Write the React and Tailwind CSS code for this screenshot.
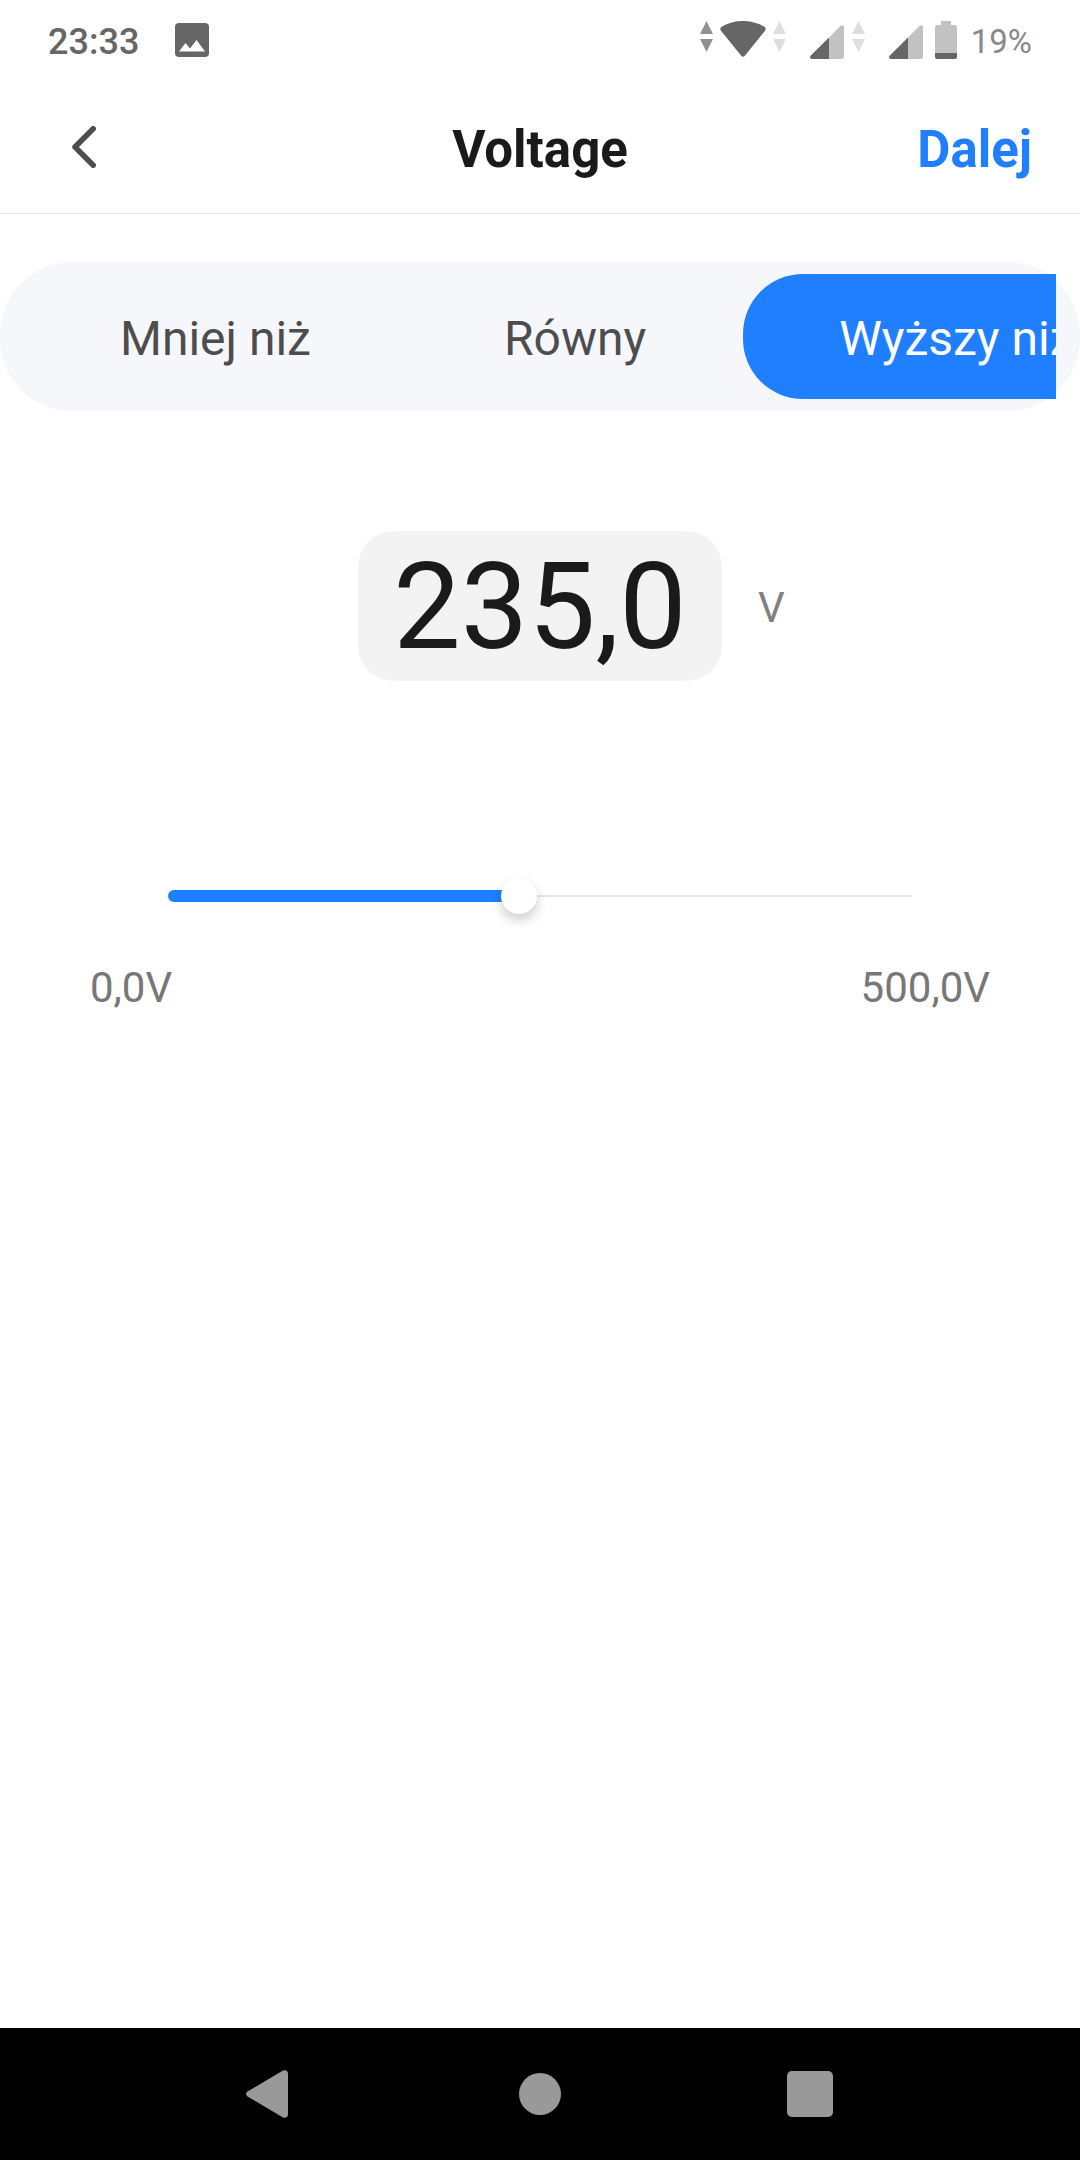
import React, { useState } from 'react';

const tabs = ["Mniej niż", "Równy", "Wyższy niż"];
const MAX = 500;
const THUMB = 36;

const formatVolt = (n) => n.toFixed(1).replace(".", ",");

function DataArrows({ className }) {
    return (
        <svg className={className} width="13" height="31" viewBox="0 0 13 31" fill="currentColor" aria-hidden="true">
            <path d="M6.5 0L13 13H0z" />
            <path d="M0 18H13L6.5 31z" />
        </svg>
    );
}

function Signal() {
    return (
        <svg width="34" height="34" viewBox="0 0 34 34" aria-hidden="true">
            <path d="M30.6.8Q34-.8 34 2.500V32Q34 34 32 34H19V12.400z" fill="#c2c2c2" />
            <path d="M19 12.400V34H2Q-1 33.500.6 30.800z" fill="#666666" />
        </svg>
    );
}

function StatusBar() {
    return (
        <div className="flex h-[84px] items-center justify-between px-12 pb-1 text-[#666666]">
            <div className="flex items-center gap-9">
                <span className="pt-1 text-4xl font-medium">23:33</span>
                <svg width="34" height="34" viewBox="0 0 34 34" aria-hidden="true">
                    <rect width="34" height="34" rx="4" fill="currentColor" />
                    <path d="M4 28.500L10.500 20L15 25.500L21.500 17L30 28.500z" fill="#ffffff" />
                </svg>
            </div>
            <div className="flex items-center">
                <div className="flex h-[38px] items-start gap-[6px]">
                    <DataArrows className="text-[#919191]" />
                    <svg width="48" height="36" viewBox="0 0 48 36" aria-hidden="true">
                        <path d="M2.600 5.800C15-2 33-2 45.400 5.800Q47.600 7.400 46 9.700L26 34.500Q24 37 22 34.500L2 9.700Q.4 7.400 2.600 5.800z" fill="currentColor" />
                    </svg>
                    <DataArrows className="text-[#dedede]" />
                </div>
                <div className="ml-6 flex h-[38px] items-end">
                    <Signal />
                </div>
                <div className="ml-2 flex h-[38px] items-start">
                    <DataArrows className="text-[#dedede]" />
                </div>
                <div className="ml-6 flex h-[38px] items-end gap-3">
                    <Signal />
                    <svg width="22" height="38" viewBox="0 0 22 38" aria-hidden="true">
                        <path d="M6 0H16V4H20Q22 4 22 6V32H0V6Q0 4 2 4H6z" fill="#c2c2c2" />
                        <path d="M0 32H22V36Q22 38 20 38H2Q0 38 0 36z" fill="currentColor" />
                    </svg>
                </div>
                <span className="ml-[14px] pt-1 text-[33px] leading-9 text-[#888888]">19%</span>
            </div>
        </div>
    );
}

function Header() {
    return (
        <header className="grid h-[130px] grid-cols-3 items-center border-b border-[#e5e5e5] px-12 text-[51px] leading-[60px] font-bold">
            <button type="button" aria-label="Wstecz" className="justify-self-start px-6 pb-1 text-[#4d4d4d]">
                <svg width="24" height="42" viewBox="0 0 24 42" fill="none" stroke="currentColor" strokeWidth="5.500" strokeLinecap="round" strokeLinejoin="round">
                    <path d="M21.200 2.800L3 21L21.200 39.200" />
                </svg>
            </button>
            <h1 className="pt-[2px] text-center text-[#1a1a1a]">Voltage</h1>
            <button type="button" className="justify-self-end pt-[2px] text-[#1f7fff]">Dalej</button>
        </header>
    );
}

function App() {
    const [selected, setSelected] = useState(2);
    const [value, setValue] = useState(235);
    const ratio = value / MAX;

    return (
        <div className="flex min-h-screen flex-col bg-white font-[Roboto,sans-serif]">
            <StatusBar />
            <Header />
            <main className="flex-1 pt-12">
                <div className="rounded-[72px] bg-[#f6f7fb] px-6 py-3">
                    <div role="tablist" className="flex gap-px overflow-hidden">
                        {tabs.map((tab, i) => (
                            <button
                                key={tab}
                                type="button"
                                role="tab"
                                aria-selected={selected === i}
                                onClick={() => setSelected(i)}
                                className={selected === i
                                    ? "h-[125px] shrink-0 rounded-[60px] bg-[#1f7fff] px-24 pt-1 text-5xl whitespace-nowrap text-white"
                                    : "h-[125px] shrink-0 rounded-[60px] px-24 pt-1 text-5xl whitespace-nowrap text-[#4d4d4d]"}
                            >
                                {tab}
                            </button>
                        ))}
                    </div>
                </div>

                <div className="mt-[120px] grid grid-cols-[1fr_auto_1fr] items-center gap-9">
                    <input
                        type="text"
                        inputMode="decimal"
                        aria-label="Napięcie"
                        value={formatVolt(value)}
                        readOnly
                        className="col-start-2 h-[150px] w-[364px] rounded-[36px] bg-[#f3f3f3] pt-[2px] text-center text-[120px] leading-[148px] text-[#1a1a1a] outline-none"
                    />
                    <span className="pt-1 text-[42px] leading-[48px] text-[#808080]">V</span>
                </div>

                <div className="mx-[168px] mt-[197px] grid items-center">
                    <div className="h-[2px] bg-[#e5e5e5] [grid-area:1/1]" />
                    <div
                        className="h-3 rounded-full bg-[#1f7fff] [grid-area:1/1]"
                        style={{ width: `calc(${ratio * 100}% + ${THUMB * (0.5 - ratio)}px)` }}
                    />
                    <input
                        type="range"
                        aria-label="Wartość napięcia"
                        min="0"
                        max={MAX}
                        step="0.1"
                        value={value}
                        onChange={(e) => setValue(Number(e.target.value))}
                        className="h-9 w-full appearance-none bg-transparent outline-none [grid-area:1/1] [&::-webkit-slider-thumb]:h-9 [&::-webkit-slider-thumb]:w-9 [&::-webkit-slider-thumb]:appearance-none [&::-webkit-slider-thumb]:rounded-full [&::-webkit-slider-thumb]:bg-white [&::-webkit-slider-thumb]:shadow-[0_6px_12px_rgba(0,0,0,0.2)]"
                    />
                </div>

                <div className="mt-[50px] flex justify-between px-[90px] text-[42px] leading-[48px] text-[#777777]">
                    <span>0,0V</span>
                    <span>500,0V</span>
                </div>
            </main>

            <nav className="bg-black text-[#999999]">
                <div className="mx-auto grid h-[132px] w-3/4 grid-cols-3 items-center justify-items-center">
                    <button type="button" aria-label="Wróć">
                        <svg width="48" height="48" viewBox="0 0 48 48" fill="currentColor">
                            <path d="M37 .6Q41-1 42 3V45Q41 49 37 47.400L1.500 26.500Q-1.500 24 1.500 21.500z" />
                        </svg>
                    </button>
                    <button type="button" aria-label="Ekran główny" className="h-[42px] w-[42px] rounded-full bg-[#999999]" />
                    <button type="button" aria-label="Ostatnie" className="h-[46px] w-[46px] rounded-[5px] bg-[#999999]" />
                </div>
            </nav>
        </div>
    );
}

export default App;
